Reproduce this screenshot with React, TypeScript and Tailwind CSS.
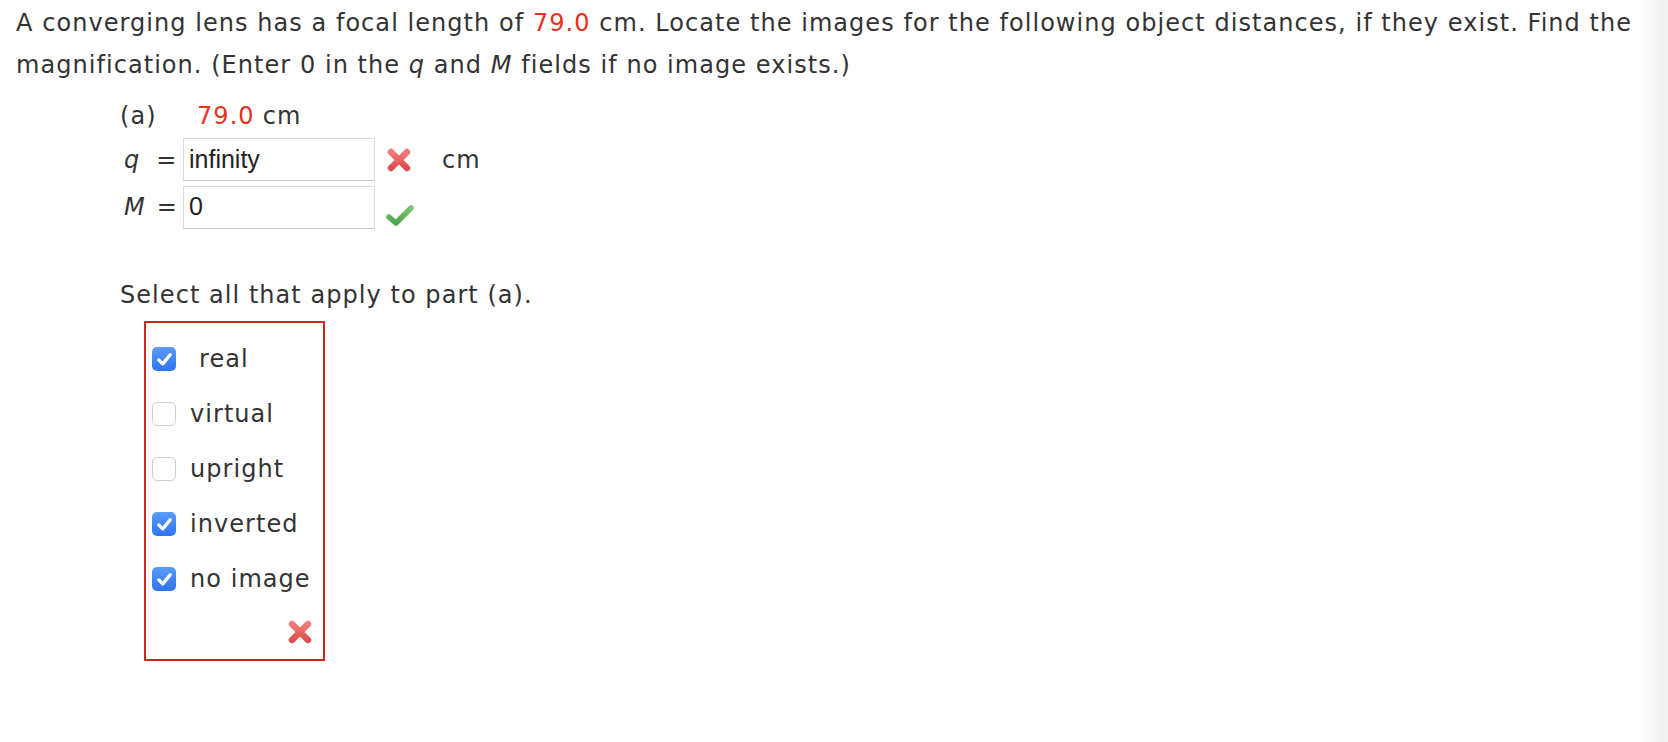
import React from 'react';

function CrossIcon({ className = '' }: { className?: string }) {
  return (
    <svg viewBox="0 0 28 28" className={className}>
      <defs>
        <linearGradient id="xg" x1="0" y1="0" x2="0" y2="1">
          <stop offset="0" stopColor="#f07b7b" />
          <stop offset="1" stopColor="#e04c4c" />
        </linearGradient>
      </defs>
      <path d="M6 6 L22 22 M22 6 L6 22" stroke="url(#xg)" strokeWidth="6.5" strokeLinecap="round" fill="none" />
    </svg>
  );
}

function CheckIcon({ className = '' }: { className?: string }) {
  return (
    <svg viewBox="0 0 30 26" className={className}>
      <defs>
        <linearGradient id="cg" x1="0" y1="0" x2="0" y2="1">
          <stop offset="0" stopColor="#7cc576" />
          <stop offset="1" stopColor="#4ea548" />
        </linearGradient>
      </defs>
      <path d="M4 14 L11 20 L26 5" stroke="url(#cg)" strokeWidth="5.5" strokeLinecap="round" strokeLinejoin="round" fill="none" />
    </svg>
  );
}

function Box({ checked }: { checked: boolean }) {
  if (checked) {
    return (
      <span className="flex h-6 w-6 shrink-0 items-center justify-center rounded-[5px] bg-gradient-to-b from-[#5a9cf8] to-[#2f74ef]">
        <svg viewBox="0 0 24 24" className="h-[21px] w-[21px]">
          <path d="M5.5 12.5 L10 17 L18.5 6.5" stroke="white" strokeWidth="3.8" strokeLinecap="round" strokeLinejoin="round" fill="none" />
        </svg>
      </span>
    );
  }
  return <span className="h-6 w-6 shrink-0 rounded-[5px] border border-[#cfcfcf] bg-white" />;
}

const options = [
  { label: 'real', checked: true, gap: 'ml-[23px]' },
  { label: 'virtual', checked: false, gap: 'ml-[14px]' },
  { label: 'upright', checked: false, gap: 'ml-[14px]' },
  { label: 'inverted', checked: true, gap: 'ml-[14px]' },
  { label: 'no image', checked: true, gap: 'ml-[14px]' },
];

export default function App() {
  return (
    <div className="relative h-[742px] w-[1668px] overflow-hidden bg-white font-['DejaVu_Sans',Verdana,sans-serif] text-[24px] tracking-[1.05px] text-[#333]">
      <p className="pl-4 pr-2 pt-[2px] leading-[42px]">
        A converging lens has a focal length of <span className="text-[#e8321f]">79.0</span> cm. Locate the images for the following object distances, if they exist. Find the magnification. (Enter 0 in the <i>q</i> and <i>M</i> fields if no image exists.)
      </p>

      <div className="ml-[120px] mt-[14px]">
        <div className="flex leading-[32px]">
          <span className="w-[77px]">(a)</span>
          <span className="text-[#e8321f]">79.0</span>
          <span className="ml-[8px]">cm</span>
        </div>

        <div className="mt-[6px] flex items-center">
          <span className="flex w-[63px] pl-[4px]">
            <i>q</i>
            <span className="ml-[16px]">=</span>
          </span>
          <div className="flex h-[43px] w-[192px] items-center border border-[#dcdcdc] border-b-[#c9c9c9] pl-[5px] font-['Liberation_Sans',Arial,sans-serif] text-[25px] tracking-normal text-[#222]">
            infinity
          </div>
          <CrossIcon className="ml-[10px] h-[28px] w-[28px]" />
          <span className="ml-[29px]">cm</span>
        </div>

        <div className="mt-[4px] flex items-center">
          <span className="flex w-[63px] pl-[4px]">
            <i>M</i>
            <span className="ml-[11px]">=</span>
          </span>
          <div className="flex h-[43px] w-[192px] items-center border border-[#dcdcdc] border-b-[#c9c9c9] pl-[5px] font-['Liberation_Sans',Arial,sans-serif] text-[25px] tracking-normal text-[#222]">
            0
          </div>
          <CheckIcon className="ml-[10px] mt-[18px] h-[26px] w-[30px]" />
        </div>

        <p className="mt-[50px] leading-[32px]">Select all that apply to part (a).</p>

        <div className="ml-[24px] mt-[10px] flex h-[340px] w-[181px] flex-col border-2 border-[#c9291f] pl-[6px]">
          <div className="mt-[24px] flex flex-col gap-[31px]">
            {options.map(o => (
              <label key={o.label} className="flex h-6 items-center">
                <Box checked={o.checked} />
                <span className={`${o.gap} whitespace-nowrap leading-[24px]`}>{o.label}</span>
              </label>
            ))}
          </div>
          <div className="mb-[13px] mt-auto flex justify-end pr-[9px]">
            <CrossIcon className="h-[28px] w-[28px]" />
          </div>
        </div>
      </div>

      <div className="absolute right-0 top-0 h-full w-[30px] bg-gradient-to-r from-transparent to-[#efefef]" />
    </div>
  );
}
